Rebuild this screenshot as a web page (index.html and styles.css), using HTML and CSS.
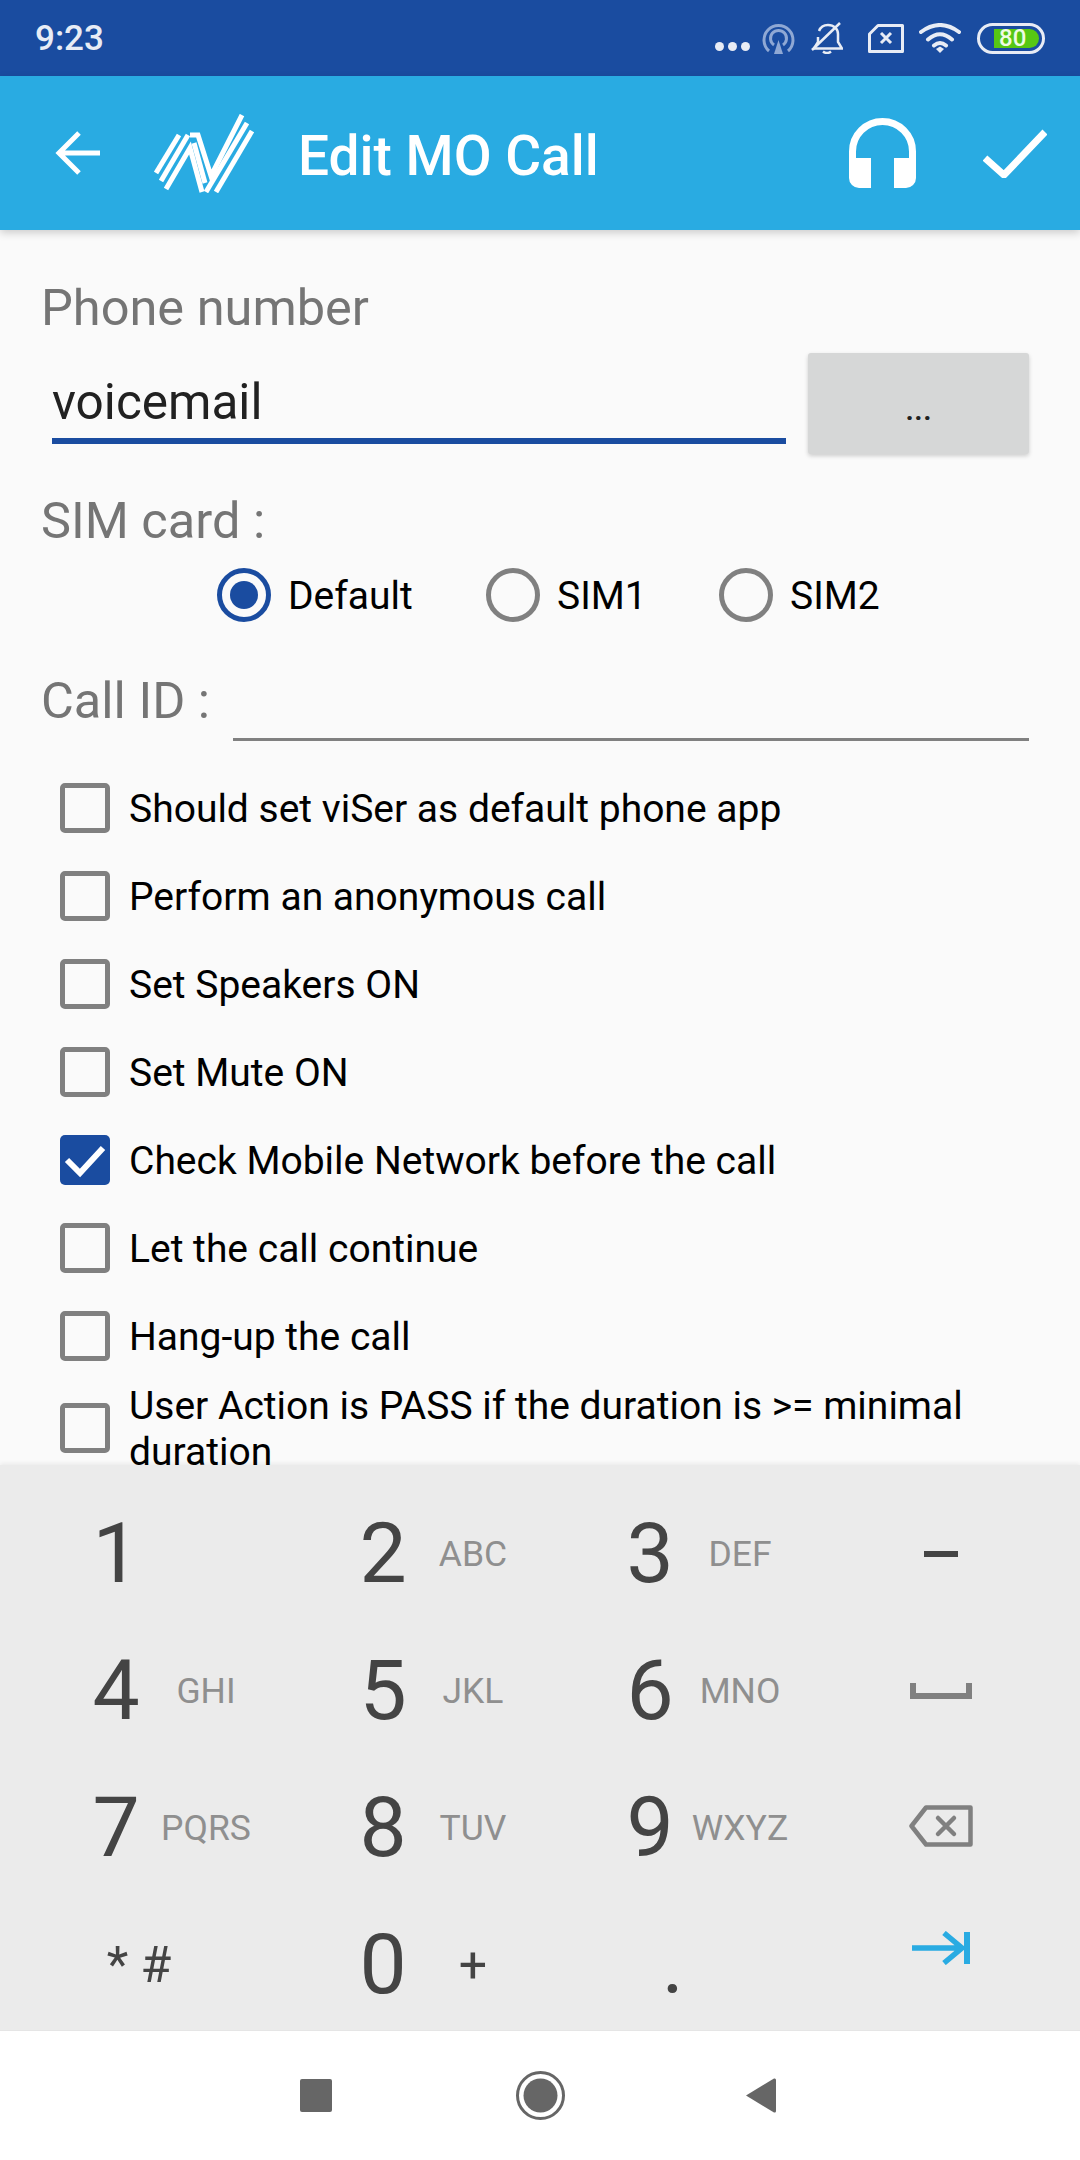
FILE: index.html
```html
<!DOCTYPE html>
<html lang="en">
<head>
    <meta charset="UTF-8">
    <title>Edit MO Call</title>
    <link rel="stylesheet" href="styles.css">
</head>
<body>
<div class="statusbar">
    <span class="time">9:23</span>
    <div class="status-icons">
        <svg class="ic-dots" width="35" height="9" viewBox="0 0 35 9"><circle cx="4.5" cy="4.5" r="4.5"/><circle cx="17.5" cy="4.5" r="4.5"/><circle cx="30.5" cy="4.5" r="4.5"/></svg>
        <svg class="ic-cast" width="33" height="32" viewBox="0 0 33 32"><path d="M7 29A14.5 14.5 0 1 1 26 29M12 23A8 8 0 1 1 21 23" fill="none" stroke="#8fa8d4" stroke-width="3"/><path d="M16.500 18L21 32H12Z" fill="#8fa8d4"/></svg>
        <svg class="ic-bell" width="32" height="32" viewBox="0 0 32 32"><path d="M3 26.500H31L27 20V12C27 7 23 3 17 3C13 3 9.500 5 8 9M7 15V20L3 26.500M12 29.500Q16 32.500 20 29.500" fill="none" stroke="#e8ecf5" stroke-width="2.500"/><path d="M1 28L29 1" stroke="#e8ecf5" stroke-width="2.500"/></svg>
        <svg class="ic-sim" width="36" height="29" viewBox="0 0 36 29"><path d="M1.500 10L10 1.500H34.500V27.500H1.500Z" fill="none" stroke="#e8ecf5" stroke-width="3" stroke-linejoin="round"/><path d="M13 9L23 19M23 9L13 19" stroke="#e8ecf5" stroke-width="3"/></svg>
        <svg class="ic-wifi" width="42" height="30" viewBox="0 0 42 30"><path d="M2 9Q21 -5 40 9M9 16.500Q21 6 33 16.500M15 22.500Q21 17.500 27 22.500" fill="none" stroke="#e8ecf5" stroke-width="4" stroke-linecap="round"/><path d="M17 26L21 23.500L25 26L21 30Z" fill="#e8ecf5"/></svg>
        <div class="battery"><div class="battery-level">80</div></div>
    </div>
</div>

<div class="appbar">
    <svg class="ic-back" width="45" height="44" viewBox="0 0 45 44"><path d="M45 22H4M24 2L4 22L24 42" fill="none" stroke="#fff" stroke-width="5"/></svg>
    <svg class="logo" width="100" height="79" viewBox="24 23 100 79"><g fill="none" stroke="#fff" stroke-width="5"><path d="M26 82L49 44"/><path d="M31 90L58 44"/><path d="M36 98L60 57L72 101"/><path d="M60 44H68L81 85L112 24"/><path d="M64 52L75 92"/><path d="M76 101L117 32"/><path d="M86 101L122 40"/></g></svg>
    <div class="title">Edit MO Call</div>
    <svg class="ic-head" width="67" height="70" viewBox="0 0 67 70"><path d="M3.500 42V33.500A30 30 0 0 1 63.500 33.500V42" fill="none" stroke="#fff" stroke-width="7"/><path d="M0 40H22V70H10A10 10 0 0 1 0 60ZM67 40H45V70H57A10 10 0 0 0 67 60Z" fill="#fff"/></svg>
    <svg class="ic-ok" width="64" height="49" viewBox="0 0 64 49"><path d="M2 29L21 46L62 3" fill="none" stroke="#fff" stroke-width="7"/></svg>
</div>

<div class="main">
    <div class="label label-phone">Phone number</div>
    <div class="phone-row">
        <div class="phone-input">voicemail</div>
        <div class="more-btn">...</div>
    </div>

    <div class="label label-sim">SIM card :</div>
    <div class="radio-row">
        <div class="radio-item item-default"><span class="radio on"></span><span class="txt">Default</span></div>
        <div class="radio-item item-sim1"><span class="radio"></span><span class="txt">SIM1</span></div>
        <div class="radio-item"><span class="radio"></span><span class="txt">SIM2</span></div>
    </div>

    <div class="callid-row">
        <div class="label callid-label">Call ID :</div>
        <div class="callid-field"></div>
    </div>

    <div class="checks">
        <div class="check-row"><span class="box"></span><span class="txt">Should set viSer as default phone app</span></div>
        <div class="check-row"><span class="box"></span><span class="txt">Perform an anonymous call</span></div>
        <div class="check-row"><span class="box"></span><span class="txt">Set Speakers ON</span></div>
        <div class="check-row"><span class="box"></span><span class="txt">Set Mute ON</span></div>
        <div class="check-row"><span class="box on"><svg width="50" height="50" viewBox="0 0 50 50"><path d="M7 25L20 38L43 13" fill="none" stroke="#fff" stroke-width="6"/></svg></span><span class="txt">Check Mobile Network before the call</span></div>
        <div class="check-row"><span class="box"></span><span class="txt">Let the call continue</span></div>
        <div class="check-row"><span class="box"></span><span class="txt">Hang-up the call</span></div>
        <div class="check-row check-long"><span class="box"></span><span class="txt">User Action is PASS if the duration is &gt;= minimal duration</span></div>
    </div>
</div>

<div class="keyboard">
    <div class="key"><span class="digit">1</span></div>
    <div class="key"><span class="digit">2</span><span class="letters">ABC</span></div>
    <div class="key"><span class="digit">3</span><span class="letters">DEF</span></div>
    <div class="key-icon">
        <svg width="34" height="6" viewBox="0 0 34 6"><rect width="34" height="6" fill="#444"/></svg>
    </div>

    <div class="key"><span class="digit">4</span><span class="letters">GHI</span></div>
    <div class="key"><span class="digit">5</span><span class="letters">JKL</span></div>
    <div class="key"><span class="digit">6</span><span class="letters">MNO</span></div>
    <div class="key-icon">
        <svg width="62" height="16" viewBox="0 0 62 16"><path d="M3 0V13H59V0" fill="none" stroke="#808080" stroke-width="6"/></svg>
    </div>

    <div class="key"><span class="digit">7</span><span class="letters">PQRS</span></div>
    <div class="key"><span class="digit">8</span><span class="letters">TUV</span></div>
    <div class="key"><span class="digit">9</span><span class="letters">WXYZ</span></div>
    <div class="key-icon key-back">
        <svg width="64" height="42" viewBox="0 0 64 42"><path d="M2.500 21L17 2.500H61.500V39.500H17Z" fill="none" stroke="#808080" stroke-width="4.500" stroke-linejoin="round"/><path d="M29 13L45 29M45 13L29 29" stroke="#808080" stroke-width="4.500" stroke-linecap="round"/></svg>
    </div>

    <div class="key"><span class="symbols">* #</span></div>
    <div class="key"><span class="digit">0</span><span class="letters plus">+</span></div>
    <div class="key"><span class="digit dot">.</span></div>
    <div class="key-icon key-next">
        <svg width="58" height="34" viewBox="0 0 58 34"><path d="M0 17H50M32 2L50 17L32 32" fill="none" stroke="#29abe2" stroke-width="5.500"/><rect x="52" y="1" width="6" height="32" fill="#29abe2"/></svg>
    </div>
</div>

<div class="navbar">
    <svg class="nav-recent" width="32" height="33" viewBox="0 0 32 33"><rect width="32" height="33" rx="2" fill="#666"/></svg>
    <svg class="nav-home" width="49" height="49" viewBox="0 0 49 49"><circle cx="24.500" cy="24.500" r="23" fill="none" stroke="#666" stroke-width="3"/><circle cx="24.500" cy="24.500" r="17" fill="#666"/></svg>
    <svg class="nav-back" width="31" height="37" viewBox="0 0 31 37"><path d="M1 18.500L29 1.500Q31 1 31 3V34Q31 36 29 35.500Z" fill="#666"/></svg>
</div>
</body>
</html>
```

FILE: styles.css
```css
* {
    box-sizing: border-box;
}
body {
    margin: 0;
    width: 1080px;
    height: 2160px;
    display: flex;
    flex-direction: column;
    overflow: hidden;
    font-family: Roboto, sans-serif;
    background: #fafafa;
}

/* status bar */
.statusbar {
    height: 76px;
    flex: none;
    display: flex;
    align-items: center;
    justify-content: space-between;
    padding: 0 35px;
    background: #1a4ca0;
    color: #e8ecf5;
}
.time {
    font-size: 35px;
    font-weight: 500;
}
.status-icons {
    display: flex;
    align-items: center;
}
.ic-dots {
    fill: #e8ecf5;
    margin-top: 17px;
}
.ic-cast {
    margin-left: 12px;
}
.ic-bell {
    margin-left: 16px;
}
.ic-sim {
    margin-left: 25px;
}
.ic-wifi {
    margin-left: 15px;
}
.battery {
    margin-left: 16px;
    width: 68px;
    height: 31px;
    padding: 3px 3px 3px 14px;
    border: 3px solid #e8ecf5;
    border-radius: 16px;
}
.battery-level {
    height: 19px;
    padding-left: 5px;
    border-radius: 0 10px 10px 0;
    background: #57c713;
    color: #eefbe3;
    font-size: 24px;
    font-weight: 500;
    line-height: 19px;
}

/* app bar */
.appbar {
    height: 154px;
    flex: none;
    position: relative;
    z-index: 2;
    display: flex;
    align-items: center;
    padding-left: 55px;
    background: #29abe2;
    box-shadow: 0 3px 8px rgba(0, 0, 0, .18);
}
.logo {
    margin-left: 54px;
}
.title {
    flex: 1;
    margin-left: 44px;
    padding-top: 5px;
    color: #fff;
    font-size: 55px;
    font-weight: 500;
}
.ic-ok {
    margin-left: 67px;
    margin-right: 33px;
}

/* form */
.main {
    flex: 1;
    min-height: 0;
    overflow: hidden;
}
.label {
    height: 60px;
    padding-top: 2px;
    padding-left: 41px;
    color: #757575;
    font-size: 50.5px;
    line-height: 60px;
}
.label-phone {
    margin-top: 46px;
}
.phone-row {
    display: flex;
    align-items: flex-start;
    gap: 22px;
    margin-top: 17px;
    padding: 0 51px 0 52px;
}
.phone-input {
    flex: 1;
    height: 91px;
    padding-top: 14px;
    border-bottom: 6px solid #1a4ca0;
    color: #212121;
    font-size: 49.5px;
    line-height: 70px;
}
.more-btn {
    width: 221px;
    height: 101px;
    padding-top: 6px;
    border-radius: 3px;
    background: #d6d7d7;
    box-shadow: 0 2px 4px rgba(0, 0, 0, .18);
    color: #212121;
    font-size: 32px;
    font-weight: 500;
    line-height: 101px;
    text-align: center;
}
.label-sim {
    margin-top: 35px;
}
.radio-row {
    display: flex;
    margin-top: 19px;
    padding-left: 217px;
}
.radio-item {
    display: flex;
    align-items: center;
    gap: 17px;
    color: #000;
    font-size: 39px;
}
.item-default {
    width: 269px;
}
.item-sim1 {
    width: 233px;
}
.txt {
    margin-top: 2px;
}
.radio {
    width: 54px;
    height: 54px;
    display: flex;
    align-items: center;
    justify-content: center;
    border: 5px solid #808080;
    border-radius: 50%;
}
.radio.on {
    border-color: #1a4ca0;
}
.radio.on::after {
    content: "";
    width: 28px;
    height: 28px;
    border-radius: 50%;
    background: #1a4ca0;
}
.callid-row {
    display: flex;
    margin-top: 47px;
    padding-right: 51px;
}
.callid-label {
    width: 233px;
}
.callid-field {
    flex: 1;
    height: 72px;
    border-bottom: 3px solid #808080;
}
.checks {
    margin-top: 23px;
}
.check-row {
    height: 88px;
    display: flex;
    align-items: center;
    gap: 19px;
    padding-left: 60px;
    padding-right: 80px;
    color: #000;
    font-size: 39px;
}
.check-long {
    height: 96px;
    line-height: 46px;
}
.box {
    width: 50px;
    height: 50px;
    flex: none;
    border: 5px solid #808080;
    border-radius: 5px;
}
.box.on {
    border: none;
    background: #1a4ca0;
}
.box svg {
    display: block;
}

/* number keyboard */
.keyboard {
    height: 565px;
    flex: none;
    position: relative;
    z-index: 1;
    overflow: hidden;
    display: grid;
    grid-template-columns: 267px 267px 267px 108px;
    grid-auto-rows: 137px;
    padding: 20px 0 0 86px;
    background: #ebebeb;
    box-shadow: 0 -2px 4px rgba(0, 0, 0, .06);
}
.key {
    display: flex;
    align-items: center;
}
.digit {
    width: 60px;
    color: #444;
    font-size: 84px;
    text-align: center;
}
.digit.dot {
    width: 64px;
    text-align: right;
}
.letters {
    width: 120px;
    color: #8f8f8f;
    font-size: 35.5px;
    text-align: center;
}
.letters.plus {
    color: #444;
    font-size: 50px;
}
.symbols {
    width: 106px;
    color: #444;
    font-size: 50px;
    text-align: center;
}
.key-icon {
    display: flex;
    align-items: center;
    justify-content: center;
}
.key-back {
    padding-bottom: 4px;
}
.key-next {
    padding-bottom: 34px;
}

/* bottom nav */
.navbar {
    height: 130px;
    flex: none;
    position: relative;
    z-index: 1;
    display: flex;
    align-items: center;
    padding-left: 300px;
    border-top: 1px solid #e5e5e5;
    background: #fff;
}
.nav-home {
    margin-left: 184px;
}
.nav-back {
    margin-left: 180px;
}
```
